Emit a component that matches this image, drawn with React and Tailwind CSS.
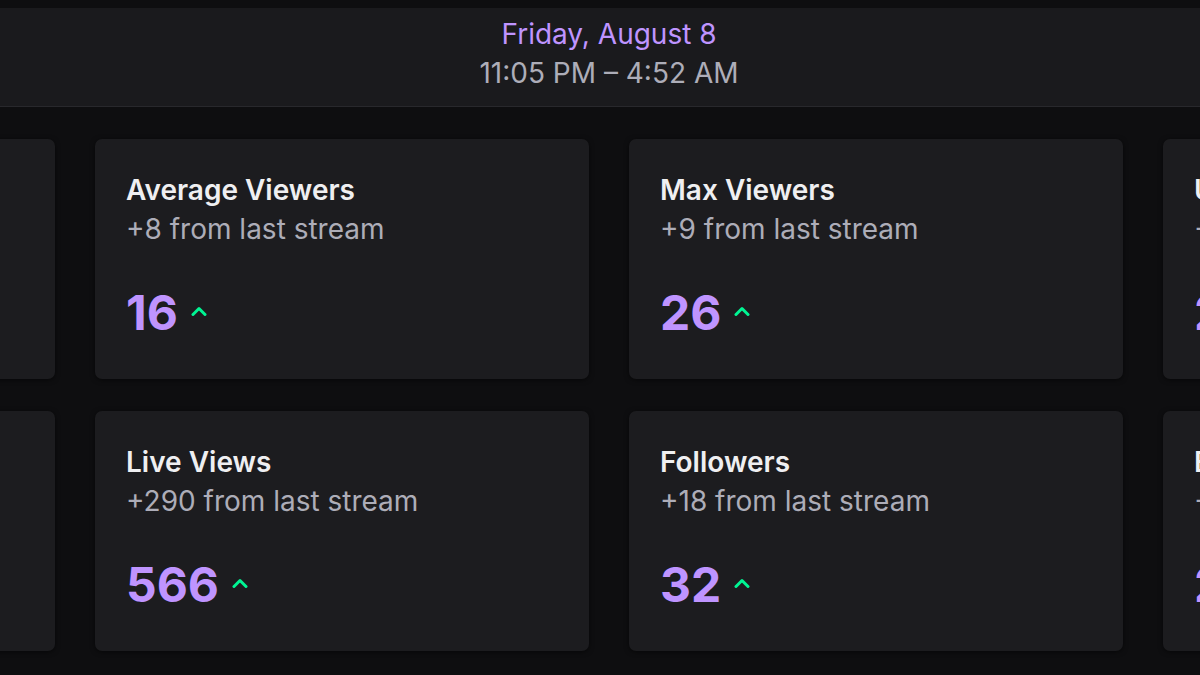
import React from "react";

const rows = [
  [
    { title: "Stream Time", sub: "+1h from last stream", value: "5:47" },
    { title: "Average Viewers", sub: "+8 from last stream", value: "16" },
    { title: "Max Viewers", sub: "+9 from last stream", value: "26" },
    { title: "Unique Viewers", sub: "+12 from last stream", value: "24" },
  ],
  [
    { title: "Minutes Watched", sub: "+2k from last stream", value: "4k" },
    { title: "Live Views", sub: "+290 from last stream", value: "566" },
    { title: "Followers", sub: "+18 from last stream", value: "32" },
    { title: "Engaged Chatters", sub: "+6 from last stream", value: "21" },
  ],
];

function Chevron() {
  return (
    <svg width="16" height="10" viewBox="0 0 16 10" className="shrink-0 -mt-1">
      <polyline
        points="2,8.5 8,2.5 14,8.5"
        fill="none"
        stroke="#00f593"
        strokeWidth="3"
        strokeLinecap="round"
        strokeLinejoin="round"
      />
    </svg>
  );
}

function Card({ title, sub, value }) {
  return (
    <div className="w-[494px] h-[240px] shrink-0 rounded-[7px] bg-[#1c1c1f] shadow-[0_1px_5px_rgba(0,0,0,0.55)] pt-8 pl-[31px] pr-8">
      <div className="text-[28px] leading-[39px] font-semibold text-[#efeff1] whitespace-nowrap">
        {title}
      </div>
      <div className="text-[28px] leading-[39px] text-[#adadb8] whitespace-nowrap">
        {sub}
      </div>
      <div className="mt-10 flex items-center gap-[13px]">
        <span className="text-[48px] leading-[48px] font-bold text-[#bf94ff]">
          {value}
        </span>
        <Chevron />
      </div>
    </div>
  );
}

export default function App() {
  return (
    <div
      className="w-[1200px] h-[675px] overflow-hidden bg-[#0e0e10] pt-2"
      style={{ fontFamily: "Inter, 'Noto Sans', sans-serif" }}
    >
      <header className="h-[99px] bg-[#1a1a1d] border-b border-[#28282c] flex flex-col items-center pt-[7px] pl-[18px]">
        <div className="text-[28px] leading-[39px] text-[#bf94ff]">
          Friday, August 8
        </div>
        <div className="text-[28px] leading-[39px] text-[#adadb8]">
          11:05 PM – 4:52 AM
        </div>
      </header>
      <div className="mt-8 flex flex-col gap-8 ml-[-439px]">
        {rows.map((row, i) => (
          <div key={i} className="flex gap-10">
            {row.map((c) => (
              <Card key={c.title} {...c} />
            ))}
          </div>
        ))}
      </div>
    </div>
  );
}
